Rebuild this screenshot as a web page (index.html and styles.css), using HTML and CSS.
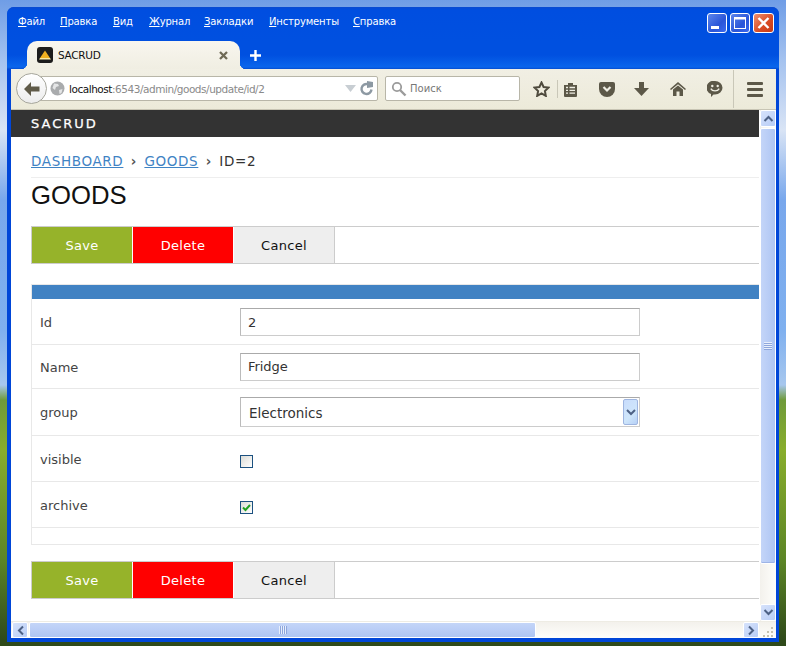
FILE: index.html
```html
<!DOCTYPE html>
<html lang="ru">
<head>
<meta charset="utf-8">
<title>SACRUD</title>
<link rel="stylesheet" href="styles.css">
</head>
<body>
<div class="desktop">
  <div class="window">
    <div class="titlebar">
      <nav class="menu">
        <span class="m m1"><u>Ф</u>айл</span>
        <span class="m m2"><u>П</u>равка</span>
        <span class="m m3"><u>В</u>ид</span>
        <span class="m m4"><u>Ж</u>урнал</span>
        <span class="m m5"><u>З</u>акладки</span>
        <span class="m m6"><u>И</u>нструменты</span>
        <span class="m m7"><u>С</u>правка</span>
      </nav>
      <div class="caption">
        <div class="capbtn"><svg width="20" height="20" viewBox="0 0 20 20"><rect x="4" y="13" width="8" height="3" fill="#fff"/></svg></div>
        <div class="capbtn"><svg width="20" height="20" viewBox="0 0 20 20"><rect x="4.5" y="4.5" width="11" height="11" fill="none" stroke="#fff"/><rect x="4" y="4" width="12" height="2.5" fill="#fff"/></svg></div>
        <div class="capbtn close"><svg width="21" height="20" viewBox="0 0 21 20"><path d="M5.5 5l10 10M15.5 5l-10 10" stroke="#fff" stroke-width="2.4" fill="none"/></svg></div>
      </div>
    </div>
    <div class="tabstrip">
      <div class="tab">
        <svg class="favicon" width="16" height="16" viewBox="0 0 16 16"><rect width="16" height="16" rx="3" fill="#1c1c1c"/><path d="M8 3.500L13 11H3z" fill="#f0b020"/><path d="M3 11h10l1 1.500H2z" fill="#fbe9a0"/></svg>
        <span class="tabtitle">SACRUD</span>
        <svg class="tabclose" width="9" height="9" viewBox="0 0 9 9"><path d="M1 1l7 7M8 1L1 8" stroke="#6f6a55" stroke-width="2.3"/></svg>
      </div>
      <svg class="newtab" width="13" height="13" viewBox="0 0 13 13"><path d="M6.500 1v11M1 6.500h11" stroke="#fff" stroke-width="2.4"/></svg>
    </div>
    <div class="toolbar">
      <div class="backbtn"><svg width="18" height="16" viewBox="0 0 18 16"><path d="M8 1L1 8l7 7 0-4.500h8.500v-5H8z" fill="#5f5a48"/></svg></div>
      <div class="urlbar">
        <svg class="globe" width="15" height="15" viewBox="0 0 15 15"><circle cx="7.500" cy="7.500" r="7" fill="#a9abad"/><path d="M4 2.500l4 .5 1 2-3 1-1 3-2.500-2zM9 9l3.500-1-1 4-2 1z" fill="#e4e5e6"/></svg>
        <span class="url"><b>localhost</b>:6543/admin/goods/update/id/2</span>
        <svg class="dropmark" width="11" height="7" viewBox="0 0 11 7"><path d="M0 0h11L5.500 7z" fill="#c8ced3"/></svg>
        <svg class="reload" width="15" height="15" viewBox="0 0 15 15"><path d="M12.500 8.500A5 5 0 1 1 9 3.200" fill="none" stroke="#8d99a3" stroke-width="2.400"/><path d="M8 0v7l6-1V1z" fill="#8d99a3"/></svg>
      </div>
      <div class="search">
        <svg width="16" height="16" viewBox="0 0 16 16"><circle cx="6" cy="6" r="4.200" fill="none" stroke="#9b9b9b" stroke-width="1.800"/><path d="M9 9l5.500 5.500" stroke="#9b9b9b" stroke-width="2.400"/></svg>
        <span class="searchtext">Поиск</span>
      </div>
      <svg class="ico star" width="17" height="16" viewBox="0 0 17 16"><path d="M8.500 1.500l2.100 4.500 4.900.6-3.600 3.400.9 4.900-4.300-2.400-4.300 2.400.9-4.900L1.500 6.600 6.400 6z" fill="none" stroke="#4f4b3e" stroke-width="2"/></svg>
      <i class="sep sep1"></i>
      <svg class="ico clip" width="15" height="15" viewBox="0 0 15 15"><path d="M1 3h4V1h5v2h4v11a1 1 0 0 1-1 1H2a1 1 0 0 1-1-1z" fill="#5c5848"/><path d="M3 5.500h2M6.500 5.500H12M3 8.300h2M6.500 8.300H12M3 11.100h2M6.500 11.100H12" stroke="#efeee3" stroke-width="1.300"/></svg>
      <svg class="ico pocket" width="16" height="15" viewBox="0 0 16 15"><path d="M0 2a2 2 0 0 1 2-2h12a2 2 0 0 1 2 2v5a8 8 0 0 1-16 0z" fill="#5c5848"/><path d="M4.500 5L8 8.500 11.500 5" fill="none" stroke="#efeee3" stroke-width="2.200"/></svg>
      <svg class="ico down" width="15" height="14" viewBox="0 0 15 14"><path d="M5 0h5v6h5l-7.500 8L0 6h5z" fill="#5c5848"/></svg>
      <svg class="ico home" width="16" height="14" viewBox="0 0 16 14"><path d="M8 0l8 7-1 1-7-5.700L1 8 0 7z" fill="#5c5848"/><path d="M8 3.500l5 4V14h-3.500V9.500h-3V14H3V7.500z" fill="#5c5848"/></svg>
      <svg class="ico smile" width="16" height="16" viewBox="0 0 16 16"><path d="M8 0a7.500 6.800 0 0 1 0 13.600H6.500L4 16v-3A7 6.800 0 0 1 8 0z" fill="#5c5848"/><circle cx="5.300" cy="5" r="1.200" fill="#efeee3"/><circle cx="10.700" cy="5" r="1.200" fill="#efeee3"/><path d="M3.800 7.600c1.500 3 6.900 3 8.400 0" fill="none" stroke="#efeee3" stroke-width="1.400"/></svg>
      <i class="sep sep2"></i>
      <div class="burger"><i></i><i></i><i></i></div>
    </div>
    <div class="viewarea">
      <div class="viewrow">
        <main class="page">
          <header class="pagehead">SACRUD</header>
          <div class="content">
            <div class="crumbs">
              <a href="#">DASHBOARD</a><span class="gt">›</span><a href="#">GOODS</a><span class="gt">›</span><span class="cur">ID=2</span>
            </div>
            <h1>GOODS</h1>
            <div class="actions">
              <button class="btn save">Save</button><button class="btn del">Delete</button><button class="btn cancel">Cancel</button>
            </div>
            <div class="formbox">
              <div class="formhead"></div>
              <div class="row r1"><label>Id</label><input class="field" value="2"></div>
              <div class="row r2"><label>Name</label><input class="field" value="Fridge"></div>
              <div class="row r3"><label>group</label>
                <div class="select"><span>Electronics</span>
                  <div class="selbtn"><svg width="10" height="7" viewBox="0 0 10 7"><path d="M1 1l4 4 4-4" fill="none" stroke="#4d6185" stroke-width="2"/></svg></div>
                </div>
              </div>
              <div class="row r4"><label>visible</label><div class="check"></div></div>
              <div class="row r5"><label>archive</label><div class="check"><svg width="11" height="11" viewBox="0 0 11 11"><path d="M2 5.500l2.500 2.500L9 3" fill="none" stroke="#21a121" stroke-width="2"/></svg></div></div>
              <div class="row r6"></div>
            </div>
            <div class="actions second">
              <button class="btn save">Save</button><button class="btn del">Delete</button><button class="btn cancel">Cancel</button>
            </div>
          </div>
        </main>
        <div class="vscroll">
          <div class="sbtn"><svg width="11" height="7" viewBox="0 0 11 7"><path d="M1.500 6l4-4 4 4" fill="none" stroke="#4d6185" stroke-width="2"/></svg></div>
          <div class="vthumb"><span class="vgrip"></span></div>
          <div class="vtrack"></div>
          <div class="sbtn"><svg width="11" height="7" viewBox="0 0 11 7"><path d="M1.500 1l4 4 4-4" fill="none" stroke="#4d6185" stroke-width="2"/></svg></div>
        </div>
      </div>
      <div class="hscroll">
        <div class="sbtn hb"><svg width="7" height="11" viewBox="0 0 7 11"><path d="M6 1.500l-4 4 4 4" fill="none" stroke="#4d6185" stroke-width="2"/></svg></div>
        <div class="hthumb"><span class="hgrip"></span></div>
        <div class="htrack"></div>
        <div class="sbtn hb"><svg width="7" height="11" viewBox="0 0 7 11"><path d="M1 1.500l4 4-4 4" fill="none" stroke="#4d6185" stroke-width="2"/></svg></div>
        <div class="grip"><svg width="17" height="16" viewBox="0 0 17 16"><path d="M12 5h2v2h-2zM8 9h2v2H8zM12 9h2v2h-2zM4 13h2v2H4zM8 13h2v2H8zM12 13h2v2h-2z" fill="#c5c2b0"/></svg></div>
      </div>
    </div>
  </div>
</div>
</body>
</html>
```
FILE: styles.css
```css
* { box-sizing: border-box; }
html, body { margin: 0; padding: 0; overflow: hidden; }
body { width: 786px; height: 646px; }
.desktop {
  position: relative; width: 786px; height: 646px; overflow: hidden;
  background: linear-gradient(180deg, #6f9de6 0, #a4c2ef 60px, #d9e4f5 130px, #78a7ec 200px, #7fb0ef 330px, #a7c7ee 385px, #6f9a3a 400px, #88ad2c 450px, #5c8526 560px, #2f4a1a 640px);
}
.window {
  position: absolute; left: 7px; top: 7px; width: 772px; height: 635px;
  background: #0046d8; border-radius: 7px 7px 0 0; padding: 0 3px 4px 4px;
  display: flex; flex-direction: column;
}
.titlebar {
  margin: 0 -3px 0 -4px; height: 34px; padding: 6px 4px 0 11px;
  display: flex; justify-content: space-between; align-items: flex-start;
  background: linear-gradient(180deg, #0a4ad0 0, #004ee0 3px, #0050e0 100%);
  border-radius: 7px 7px 0 0;
}
.menu { display: flex; height: 16px; padding-top: 1px; font: 10px/16px "DejaVu Sans", sans-serif; letter-spacing: -.15px; color: #fff; }
.m { display: block; white-space: nowrap; }
.m1 { width: 42px; } .m2 { width: 53px; } .m3 { width: 36px; } .m4 { width: 55px; } .m5 { width: 65px; } .m6 { width: 84px; }
.caption { display: flex; gap: 3px; margin-right: 1px; }
.capbtn {
  width: 20px; height: 20px; border: 1px solid #fff; border-radius: 3px; position: relative;
  background: linear-gradient(135deg, #5c86ec, #2a55d8 60%, #3a6af0);
  display: flex; align-items: center; justify-content: center;
}
.capbtn svg { flex: none; margin: -1px; }
.capbtn.close { width: 21px; background: linear-gradient(135deg, #ee9070, #d84a22 60%, #c83a14); }
.tabstrip {
  margin: 0 -3px 0 -4px; padding: 0 0 0 20px; height: 28px; display: flex; align-items: center;
  background: linear-gradient(180deg, #0050e0 0, #0050e0 14px, #0a66ec 26px, #0a5ae0 27px, #004ecf 28px);
}
.tab {
  position: relative; width: 213px; height: 28px; padding: 0 0 0 10px;
  display: flex; align-items: center;
  background: linear-gradient(180deg, #f8f6ef 0, #f0eee2 100%);
  border-radius: 10px 10px 0 0;
}
.tab::before, .tab::after {
  content: ""; position: absolute; bottom: 0; width: 6px; height: 6px;
}
.tab::before { left: -6px; background: radial-gradient(circle at 0 0, transparent 6px, #f0eee2 6.500px); }
.tab::after { right: -6px; background: radial-gradient(circle at 100% 0, transparent 6px, #f0eee2 6.500px); }
.favicon { flex: none; }
.tabtitle { margin-left: 5px; width: 152px; font: 10.500px/14px "DejaVu Sans", sans-serif; color: #111; letter-spacing: -.3px; }
.tabclose { flex: none; margin-left: 9px; }
.newtab { margin-left: 9px; margin-top: 1px; }
.toolbar {
  height: 41px; flex: none; display: flex; align-items: center; position: relative;
  background: linear-gradient(180deg, #f1efe4 0, #ecead9 100%);
  border-bottom: 1px solid #c8c5b4;
}
.backbtn {
  position: absolute; left: 5px; top: 4px; width: 31px; height: 31px; border-radius: 50%;
  background: linear-gradient(180deg, #fff, #ececec); border: 1px solid #a6a69c;
  display: flex; align-items: center; justify-content: center; z-index: 1;
}
.urlbar {
  margin-left: 19px; width: 348px; height: 25px; margin-top: -1px; background: #fff;
  border: 1px solid #b8b6a8; border-radius: 2px; display: flex; align-items: center; padding-left: 21px;
}
.globe { flex: none; margin-left: -2px; }
.url { margin-left: 4px; width: 276px; font: 10.500px/14px "DejaVu Sans", sans-serif; color: #8a8a8a; white-space: nowrap; letter-spacing: -.46px; }
.url b { font-weight: normal; color: #111; }
.dropmark { flex: none; margin-left: 0; }
.reload { flex: none; margin-left: 3px; }
.search {
  margin-left: 7px; width: 135px; height: 25px; margin-top: -1px; background: #fff;
  border: 1px solid #b8b6a8; border-radius: 2px; display: flex; align-items: center; padding-left: 5px;
}
.searchtext { margin-left: 3px; font: 10px/14px "DejaVu Sans", sans-serif; color: #777; }
.ico { flex: none; }
.star { margin-left: 13px; }
.sep { flex: none; width: 1px; background: #c9c7b8; }
.sep1 { height: 18px; margin-left: 7px; }
.sep2 { height: 38px; margin-left: 10px; }
.clip { margin-left: 5px; }
.pocket { margin-left: 21px; }
.down { margin-left: 19px; }
.home { margin-left: 21px; }
.smile { margin-left: 21px; }
.burger { margin-left: 13px; width: 16px; display: flex; flex-direction: column; gap: 3px; }
.burger i { display: block; height: 3px; background: #5c5848; border-radius: 1px; }
.viewarea { flex: 1; min-height: 0; display: flex; flex-direction: column; background: #fff; }
.viewrow { flex: 1; min-height: 0; display: flex; }
.page { flex: 1; min-width: 0; overflow: hidden; background: #fff; }
.pagehead {
  height: 27px; background: #333; color: #fff; padding-left: 20px;
  font: 13px/28px "DejaVu Sans", sans-serif; letter-spacing: 2px; -webkit-text-stroke: .25px #fff;
}
.content { padding: 14px 0 0 20px; }
.crumbs { height: 27px; border-bottom: 1px solid #eee; font: 13.500px/21px "DejaVu Sans", sans-serif; display: flex; color: #333; letter-spacing: .65px; }
.crumbs a { color: #3f83c4; }
.gt { width: 21px; text-align: center; color: #555; font-weight: bold; }
h1 { margin: 0; height: 48px; font: normal 25.700px/34px "Liberation Sans", sans-serif; color: #111; }
.actions { height: 38px; border: 1px solid #ccc; border-right: 0; display: flex; background: #fff; }
.second { margin-top: 16px; }
.btn {
  width: 101px; height: 36px; border: 0; border-right: 1px solid #ccc; padding: 2px 0 0; margin: 0;
  font: 13px/34px "DejaVu Sans", sans-serif; letter-spacing: .3px;
}
.btn.save { width: 100px; border-right: 0; margin-right: 1px; background: #96b32a; color: #fff; }
.btn.del { width: 100px; border-right: 0; margin-right: 1px; background: #f00; color: #fff; }
.btn.cancel { background: #eee; color: #111; }
.formbox { margin-top: 20px; border: 1px solid #e8e8e8; border-right: 0; }
.formhead { height: 14px; background: #4182c3; }
.row { display: flex; align-items: center; border-top: 1px solid #e8e8e8; padding-left: 8px; font: 13px/18px "DejaVu Sans", sans-serif; color: #444; }
.row label { width: 200px; flex: none; padding-top: 2px; }
.r1 { height: 45px; border-top-color: #fff; }
.r2 { height: 44px; }
.r3 { height: 47px; }
.r4, .r5 { height: 46px; }
.r6 { height: 17px; }
.r4 label, .r5 label { margin-top: -1px; padding-top: 0; margin-bottom: -3px; }
.field {
  width: 400px; height: 28px; margin: 0; padding: 0 7px; font: 13px/18px "DejaVu Sans", sans-serif; color: #333;
  border: 1px solid #ccc; border-top-color: #aaa; border-left-color: #bbb; background: #fff; outline: 0;
}
.r2 .field { letter-spacing: -.05px; }
.select {
  width: 400px; height: 30px; border: 1px solid #ccc; border-top-color: #aaa; border-left-color: #bbb;
  display: flex; align-items: center; justify-content: space-between; padding: 0 1px 0 8px; color: #333; font-size: 13.500px;
}
.select span { padding-top: 1px; }
.selbtn {
  width: 15px; height: 26px; border: 1px solid #9eb5e0; border-radius: 2px;
  background: linear-gradient(135deg, #c8dcfc, #cfe6fb 60%, #b6d0f6);
  display: flex; align-items: center; justify-content: center;
}
.check {
  width: 13px; height: 13px; border: 1px solid #1c5180; background: linear-gradient(135deg, #dcdcd6, #fff);
  display: flex; align-items: center; justify-content: center;
}
.check svg { flex: none; margin: -1px; }
.r4 .check, .r5 .check { margin-top: 6px; }
.vscroll { width: 17px; flex: none; display: flex; flex-direction: column; border-left: 1px solid #fff; background: linear-gradient(90deg, #f3f1ec, #fefefb); }
.sbtn {
  flex: none; width: 16px; height: 17px; border: 1px solid #fff; border-radius: 2px;
  background: linear-gradient(135deg, #d6e2fb, #b8cdf6);
  display: flex; align-items: center; justify-content: center;
}
.vthumb {
  flex: none; height: 436px; border: 1px solid #fff; margin-top: 1px; border-radius: 2px;
  background: linear-gradient(90deg, #c4d5f8, #b9cdf6 50%, #aec5f2); position: relative;
  box-shadow: inset 0 -1px 0 #9db4e6;
  display: flex; align-items: center; justify-content: center;
}
.vgrip { width: 8px; height: 8px; background: repeating-linear-gradient(180deg, #e8effc 0 1px, #8ea6dc 1px 2px); }
.vtrack { flex: 1; }
.hscroll { height: 17px; flex: none; display: flex; background: linear-gradient(180deg, #f3f1ec, #fefefb); border-top: 1px solid #eeece4; }
.hb { height: 16px; }
.hscroll .sbtn:first-child { margin-left: 1px; }
.hthumb {
  flex: none; width: 507px; margin-left: 1px; border: 1px solid #fff; border-radius: 2px;
  background: linear-gradient(180deg, #c4d5f8, #b9cdf6 50%, #aec5f2);
  display: flex; align-items: center; justify-content: center;
}
.hgrip { width: 8px; height: 8px; background: repeating-linear-gradient(90deg, #e8effc 0 1px, #8ea6dc 1px 2px); }
.htrack { flex: 1; }
.grip { flex: none; width: 17px; height: 16px; }
.grip svg { display: block; }
```
